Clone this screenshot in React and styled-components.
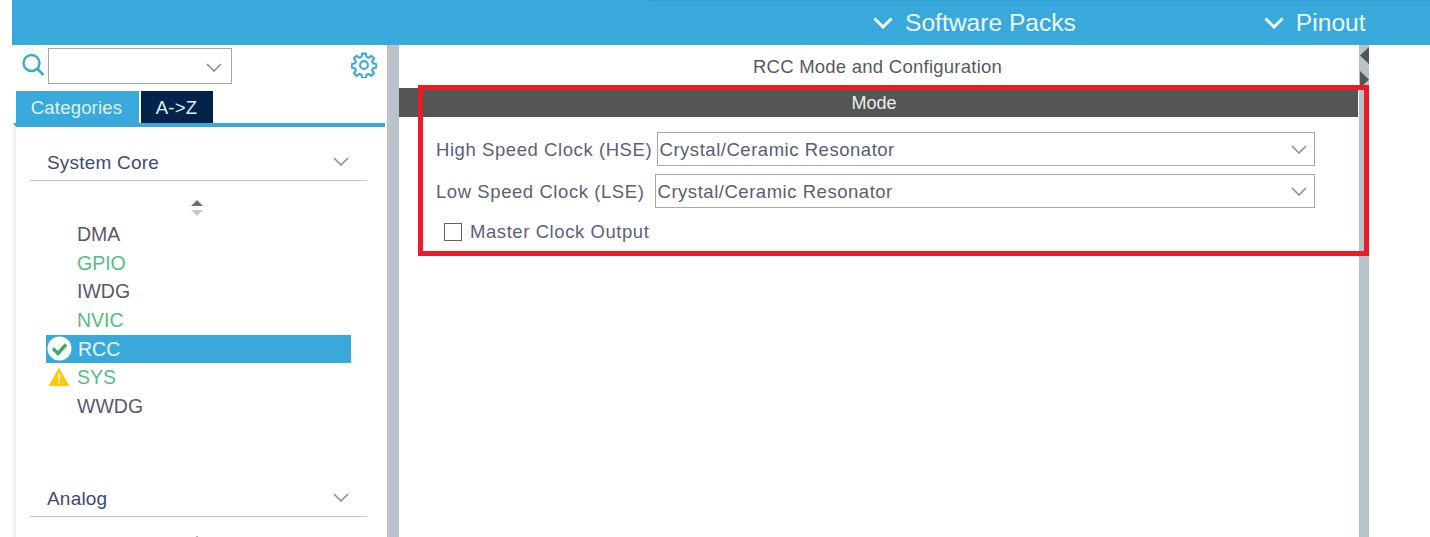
import React from "react";
import styled, { createGlobalStyle } from "styled-components";

const Global = createGlobalStyle`
  html, body { margin: 0; padding: 0; background: #fff; }
  body { font-family: "Liberation Sans", Arial, sans-serif; overflow: hidden; }
`;
const Page = styled.div`
  position: relative; width: 1430px; height: 537px; overflow: hidden;
  padding-left: 12px; box-sizing: border-box; background: #fff;
`;
const Header = styled.header`
  height: 45px; width: 1418px; background: #39a9dc; display: flex; flex-direction: column;
`;
const HeaderLine = styled.div`
  height: 1px; margin-left: 638px; background: #2f9cd2; flex: none;
`;
const HeaderNav = styled.nav`
  flex: 1; display: flex; align-items: center; color: #eef8fd;
  font-size: 24.6px; padding-left: 861px;
`;
const NavItem = styled.div`
  display: flex; align-items: center; gap: 12px; margin-right: ${p => p.$gap || 0}px; white-space: nowrap;
`;
const Body = styled.div` display: flex; height: 492px; `;
const Sidebar = styled.aside` width: 375px; flex: none; display: flex; flex-direction: column; `;
const SearchRow = styled.div`
  height: 46px; box-sizing: border-box; display: flex; align-items: flex-start; padding: 3px 0 0 9px; flex: none;
`;
const SearchIcon = styled.svg` width: 25px; height: 25px; margin-top: 5px; margin-right: 2px; flex: none; `;
const SearchBox = styled.div`
  width: 184px; height: 36px; box-sizing: border-box; border: 1.5px solid #a3a9ad; display: flex;
  align-items: center; justify-content: flex-end; padding: 2px 9px 0 0; background: #fff;
`;
const GearIcon = styled.svg` width: 26px; height: 26px; margin: 4px 0 0 119px; flex: none; `;
const Tabs = styled.div` display: flex; align-items: flex-end; gap: 2px; height: 32px; padding-left: 4px; flex: none; `;
const Tab = styled.div`
  height: 32px; width: ${p => p.$w}px; display: flex; align-items: center; justify-content: center;
  background: ${p => p.$active ? "#39a9dc" : "#03234b"}; color: #dff2fb;
  font-size: 18.5px; letter-spacing: .2px; box-sizing: border-box; padding: 1px ${p => p.$active ? 2 : 1}px 0 0;
`;
const Panel = styled.div`
  flex: 1; margin-left: 1px; margin-right: 2px; border-top: 4px solid #39a9dc; border-left: 3px solid #f0f2f4;
  padding: 0 18px 0 14px; overflow: hidden; display: flex; flex-direction: column;
`;
const Category = styled.div`
  display: flex; align-items: center; justify-content: space-between; height: 54px; margin-top: ${p => p.$top}px;
  box-sizing: border-box; padding: 18px 18px 0 17px; border-bottom: 1.5px solid #bcc6cc; flex: none;
  font-size: 19px; letter-spacing: .2px; color: #3e4a78;
`;
const CatChevron = styled.span` display: flex; margin-bottom: 3px; `;
const SortBox = styled.div` display: flex; justify-content: center; width: 334px; margin-top: 19px; height: 16px; flex: none; `;
const List = styled.ul` list-style: none; margin: 4.4px 0 0 16px; padding: 0; width: 305px; `;
const Item = styled.li`
  height: 28.6px; display: flex; align-items: center; position: relative; padding-left: ${p => p.$selected ? 32 : 31}px;
  font-size: 19.5px; box-sizing: border-box;
  color: ${p => p.$selected ? "#eaf7fd" : p.$green ? "#56bd7e" : "#5a5a68"};
  background: ${p => p.$selected ? "#39a9dc" : "transparent"};
`;
const ItemIcon = styled.svg` position: absolute; left: ${p => p.$left}px; top: ${p => p.$t}px; `;
const Splitter = styled.div` width: 12px; flex: none; background: #b8c4ca; `;
const Main = styled.main` width: 960px; flex: none; display: flex; flex-direction: column; `;
const Title = styled.div`
  height: 43px; flex: none; display: flex; align-items: center; justify-content: center; padding-right: 3px;
  font-size: 18.5px; letter-spacing: .25px; color: #555a60;
`;
const ModeBar = styled.div`
  height: 29px; width: 959px; flex: none; background: #545654; color: #eceeee; display: flex; align-items: center;
  justify-content: center; font-size: 18px; padding: 1px 9px 0 0; box-sizing: border-box;
`;
const Form = styled.div` padding: 15px 0 0 37px; display: flex; flex-direction: column; `;
const Row = styled.div` display: flex; align-items: center; height: 34px; margin-bottom: 8px; `;
const Label = styled.label`
  font-size: 18.5px; color: #5d6078; letter-spacing: .57px; white-space: nowrap; width: ${p => p.$w}px; flex: none; padding-top: 1px;
`;
const Select = styled.div`
  width: ${p => p.$w}px; height: 34px; box-sizing: border-box; border: 1.5px solid #a3a9ad; flex: none;
  display: flex; align-items: center; justify-content: space-between; padding: 1px 7px 0 1.5px;
  font-size: 18.5px; color: #5a5e70; letter-spacing: .53px;
`;
const CheckRow = styled.div`
  display: flex; align-items: center; gap: 8px; margin: 6px 0 0 8px; height: 20px;
  font-size: 18.5px; color: #5d6078; letter-spacing: .57px; white-space: nowrap;
`;
const Check = styled.span` width: 18px; height: 18px; box-sizing: border-box; border: 1.5px solid #5f6468; flex: none; `;
const RightBar = styled.div` width: 10px; flex: none; background: #b8c4ca; display: flex; flex-direction: column; align-items: flex-end; gap: 7px; padding-top: 2px; `;
const CollapseArrow = styled.svg` width: 9px; height: 17px; flex: none; `;
const Highlight = styled.div`
  position: absolute; left: 418px; top: 85px; width: 951px; height: 171px; box-sizing: border-box;
  border: 5px solid #ed1c24; pointer-events: none;
`;

const Chevron = ({ w = 16, h = 9, color = "#8a9095", sw = 1.6 }) => (
  <svg width={w} height={h} viewBox="0 0 16 9" fill="none" style={{ flex: "none" }}>
    <path d="M1 1l7 7 7-7" stroke={color} strokeWidth={sw} />
  </svg>
);
const NavChevron = () => (
  <svg width="20" height="12" viewBox="0 0 20 12" fill="none" style={{ flex: "none" }}>
    <path d="M1.5 1.5l8.5 8.5 8.5-8.5" stroke="#f2fafe" strokeWidth="3" />
  </svg>
);
const Sort = () => (
  <svg width="14" height="16" viewBox="0 0 14 16">
    <path d="M7 0l6 6H1z" fill="#6b7074" />
    <path d="M7 16l6-6H1z" fill="#c6c9cb" />
  </svg>
);
const items = [
  { t: "DMA" }, { t: "GPIO", green: 1 }, { t: "IWDG" }, { t: "NVIC", green: 1 },
  { t: "RCC", selected: 1 }, { t: "SYS", green: 1, warn: 1 }, { t: "WWDG" },
];

export default function App() {
  return (
    <Page>
      <Global />
      <Header>
        <HeaderLine />
        <HeaderNav>
          <NavItem $gap={188}><NavChevron />Software Packs</NavItem>
          <NavItem><NavChevron />Pinout</NavItem>
        </HeaderNav>
      </Header>
      <Body>
        <Sidebar>
          <SearchRow>
            <SearchIcon viewBox="0 0 25 25" fill="none" stroke="#39a9dc">
              <circle cx="10.5" cy="10" r="8" strokeWidth="2.4" />
              <path d="M16.5 16l6 6" strokeWidth="2.6" />
            </SearchIcon>
            <SearchBox><Chevron /></SearchBox>
            <GearIcon viewBox="0 0 24 24" fill="none" stroke="#39a9dc" strokeWidth="1.9">
              <circle cx="12" cy="12" r="3.6" />
              <path d="M10.3 1.5h3.4l.6 3 1.9.8 2.6-1.7 2.4 2.4-1.7 2.6.8 1.9 3 .6v3.4l-3 .6-.8 1.9 1.7 2.6-2.4 2.4-2.6-1.7-1.9.8-.6 3h-3.4l-.6-3-1.9-.8-2.6 1.7-2.4-2.4 1.7-2.6-.8-1.9-3-.6v-3.4l3-.6.8-1.9-1.7-2.6 2.4-2.4 2.6 1.7 1.9-.8z" />
            </GearIcon>
          </SearchRow>
          <Tabs>
            <Tab $active $w={123}>Categories</Tab>
            <Tab $w={72}>A-&gt;Z</Tab>
          </Tabs>
          <Panel>
            <Category $top={0}>System Core<CatChevron><Chevron /></CatChevron></Category>
            <SortBox><Sort /></SortBox>
            <List>
              {items.map(it => (
                <Item key={it.t} $green={it.green} $selected={it.selected}>
                  {it.selected && (
                    <ItemIcon $left={1} $t={1} width="25" height="25" viewBox="0 0 25 25">
                      <circle cx="12.5" cy="12.5" r="12" fill="#fff" />
                      <path d="M6 12.5l5 5 8-9" fill="none" stroke="#3ea86f" strokeWidth="3.4" />
                    </ItemIcon>
                  )}
                  {it.warn && (
                    <ItemIcon $left={3} $t={5} width="20" height="18" viewBox="0 0 20 18">
                      <path d="M10 0.5l9.7 17H.3z" fill="#fdc90c" stroke="#fdc90c" strokeLinejoin="round" />
                      <path d="M10 6v6M10 13.5v2" stroke="#fff" strokeWidth="1.5" />
                    </ItemIcon>
                  )}
                  {it.t}
                </Item>
              ))}
            </List>
            <Category $top={42.6}>Analog<CatChevron><Chevron /></CatChevron></Category>
            <SortBox><Sort /></SortBox>
          </Panel>
        </Sidebar>
        <Splitter />
        <Main>
          <Title>RCC Mode and Configuration</Title>
          <ModeBar>Mode</ModeBar>
          <Form>
            <Row>
              <Label $w={221}>High Speed Clock (HSE)</Label>
              <Select $w={658}>Crystal/Ceramic Resonator<Chevron /></Select>
            </Row>
            <Row>
              <Label $w={219}>Low Speed Clock (LSE)</Label>
              <Select $w={660}>Crystal/Ceramic Resonator<Chevron /></Select>
            </Row>
            <CheckRow><Check />Master Clock Output</CheckRow>
          </Form>
        </Main>
        <RightBar>
          <CollapseArrow viewBox="0 0 9 17"><path d="M9 0v17L0 8.5z" fill="#545654" /></CollapseArrow>
          <CollapseArrow viewBox="0 0 9 17"><path d="M0 0v17l9-8.5z" fill="#545654" /></CollapseArrow>
        </RightBar>
      </Body>
      <Highlight />
    </Page>
  );
}
